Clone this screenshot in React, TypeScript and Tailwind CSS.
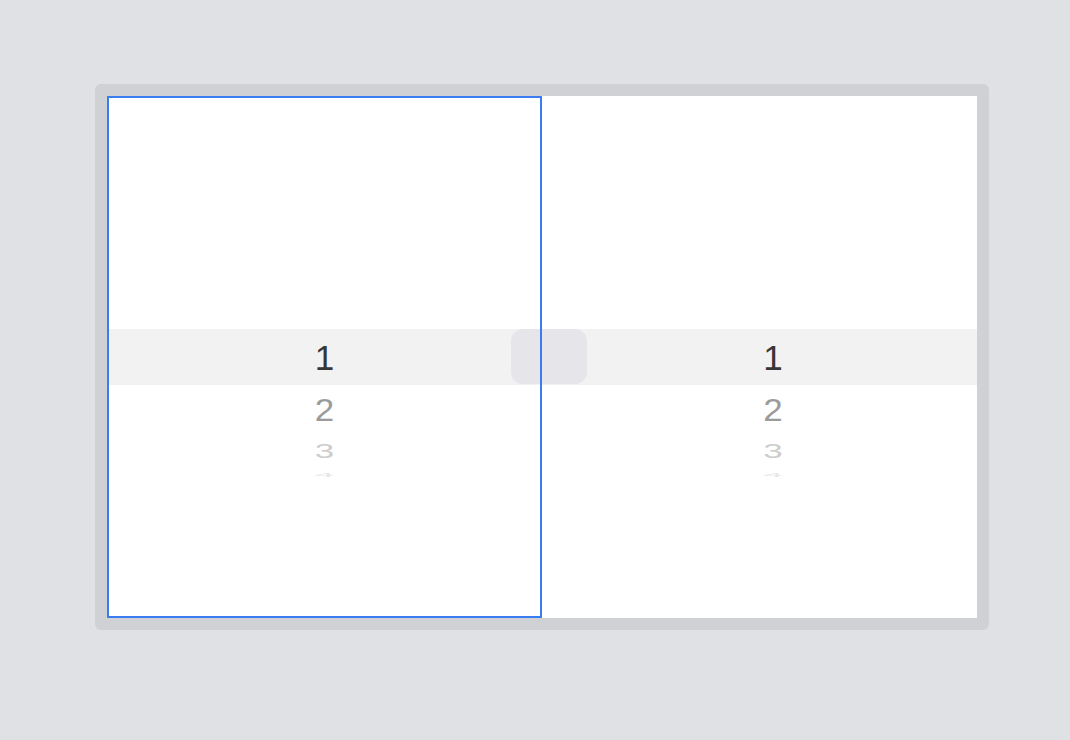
import React from 'react';

const rows = [
  { n: '2', h: 'h-[48px]', cls: 'text-[#9b9b9b] scale-y-[0.92]' },
  { n: '3', h: 'h-[34px]', cls: 'text-[#cdcdcd] scale-y-[0.6]' },
  { n: '4', h: 'h-[16px]', cls: 'text-[#e6e6e6] scale-y-[0.15]' },
];

function Wheel({ shift }: { shift: string }) {
  return (
    <div className="flex flex-1 flex-col">
      <div className="h-[233px]" />
      <div className={`flex h-[56px] items-center justify-center bg-[#f2f2f2] ${shift}`}>
        <span className="text-[35px] leading-none text-[#363636]">1</span>
      </div>
      {rows.map((r) => (
        <div key={r.n} className={`flex items-center justify-center overflow-hidden ${r.h} ${shift}`}>
          <span className={`text-[35px] leading-none ${r.cls}`}>{r.n}</span>
        </div>
      ))}
    </div>
  );
}

export default function App() {
  return (
    <div className="h-[740px] w-full bg-[#e0e1e5] pl-[95px] pt-[84px]" style={{ fontFamily: '"Liberation Sans", Arial, sans-serif' }}>
      <div className="w-[894px] rounded-[6px] bg-[#d0d1d5] p-3">
        <div className="relative flex h-[522px] bg-white">
          <div className="relative flex w-[435px]">
            <Wheel shift="" />
            <div className="pointer-events-none absolute inset-0 z-20 border-2 border-[#3a7df2]" />
          </div>
          <div className="flex w-[435px]">
            <Wheel shift="pl-[27px]" />
          </div>
          <div className="absolute left-[404px] top-[233px] z-10 h-[55px] w-[76px] rounded-[12px] bg-[#e6e6ea]" />
        </div>
      </div>
    </div>
  );
}
